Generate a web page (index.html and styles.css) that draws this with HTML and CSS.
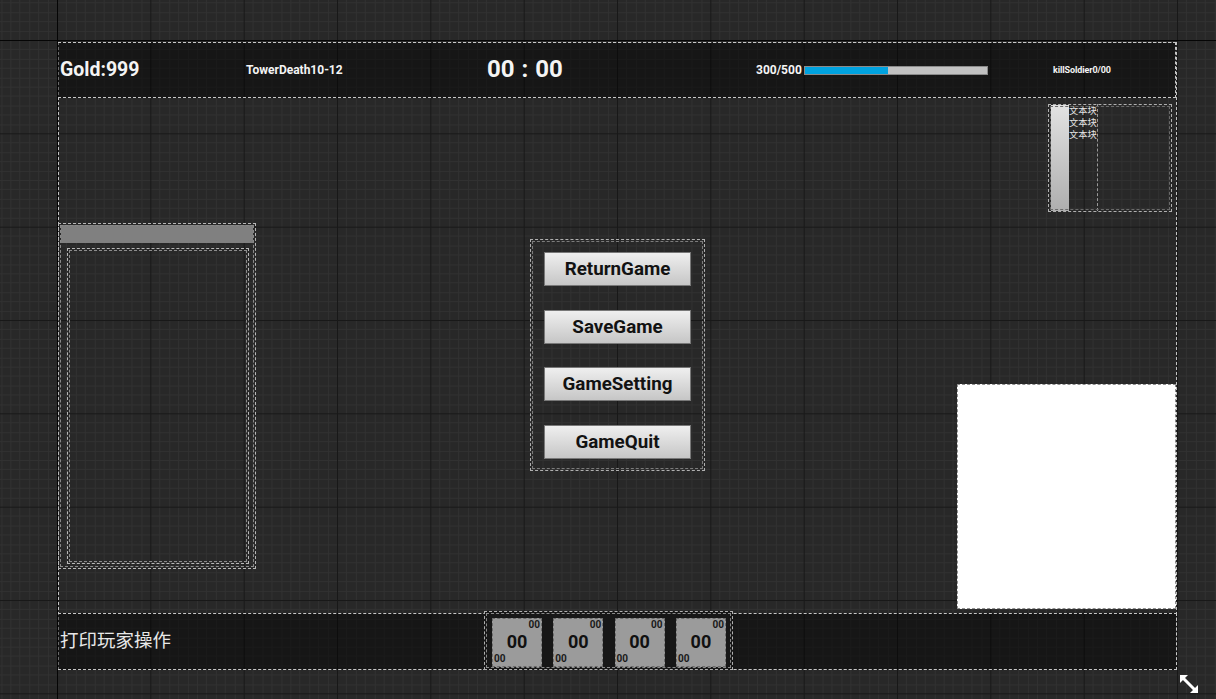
FILE: index.html
```html
<!DOCTYPE html>
<html>
<head>
<meta charset="utf-8">
<link rel="stylesheet" href="styles.css">
</head>
<body>
<svg class="grid" width="1216" height="699" shape-rendering="crispEdges">
  <defs>
    <pattern id="g" x="57" y="40" width="93.3333" height="93.3333" patternUnits="userSpaceOnUse">
      <g fill="#313131">
        <rect x="9.333" y="0" width="1" height="94"/>
        <rect x="18.667" y="0" width="1" height="94"/>
        <rect x="28" y="0" width="1" height="94"/>
        <rect x="37.333" y="0" width="1" height="94"/>
        <rect x="46.667" y="0" width="1" height="94"/>
        <rect x="56" y="0" width="1" height="94"/>
        <rect x="65.333" y="0" width="1" height="94"/>
        <rect x="74.667" y="0" width="1" height="94"/>
        <rect x="84" y="0" width="1" height="94"/>
        <rect y="9.333" x="0" height="1" width="94"/>
        <rect y="18.667" x="0" height="1" width="94"/>
        <rect y="28" x="0" height="1" width="94"/>
        <rect y="37.333" x="0" height="1" width="94"/>
        <rect y="46.667" x="0" height="1" width="94"/>
        <rect y="56" x="0" height="1" width="94"/>
        <rect y="65.333" x="0" height="1" width="94"/>
        <rect y="74.667" x="0" height="1" width="94"/>
        <rect y="84" x="0" height="1" width="94"/>
      </g>
      <g fill="#181818">
        <rect x="0" y="0" width="1" height="94"/>
        <rect x="0" y="0" width="94" height="1"/>
      </g>
    </pattern>
  </defs>
  <rect width="1216" height="699" fill="#282828"/>
  <rect width="1216" height="699" fill="url(#g)"/>
  <rect x="57" y="0" width="1" height="699" fill="#050505"/>
  <rect x="0" y="40" width="1216" height="1" fill="#050505"/>
</svg>

<div class="canvas">
  <div class="topbar">
    <div class="cell c-gold">Gold:999</div>
    <div class="cell c-tower">TowerDeath10-12</div>
    <div class="cell c-time">00 : 00</div>
    <div class="cell c-hp">
      <span class="hp-text">300/500</span>
      <div class="bar"><div class="fill" style="width:45.6%"></div></div>
    </div>
    <div class="cell c-kill">killSoldier0/00</div>
  </div>

  <div class="texts">
    <div class="tbar"></div>
    <div class="tcol">
      <div class="tline">文本块</div>
      <div class="tline">文本块</div>
      <div class="tline">文本块</div>
    </div>
  </div>

  <div class="leftpanel">
    <div class="lp-head"></div>
    <div class="lp-list"></div>
  </div>

  <div class="menu">
    <div class="btn">ReturnGame</div>
    <div class="btn">SaveGame</div>
    <div class="btn">GameSetting</div>
    <div class="btn">GameQuit</div>
  </div>

  <div class="minimap"></div>

  <div class="bottombar">
    <span class="log">打印玩家操作</span>
  </div>

  <div class="slots">
    <div class="slot"><span class="s-tr">00</span><span class="s-big">00</span><span class="s-bl">00</span></div>
    <div class="slot"><span class="s-tr">00</span><span class="s-big">00</span><span class="s-bl">00</span></div>
    <div class="slot"><span class="s-tr">00</span><span class="s-big">00</span><span class="s-bl">00</span></div>
    <div class="slot"><span class="s-tr">00</span><span class="s-big">00</span><span class="s-bl">00</span></div>
  </div>
</div>

<svg class="resize" width="18" height="18" viewBox="0 0 18 18">
  <polygon points="0,0 8,0 0,8" fill="#ffffff"/>
  <polygon points="18,18 10,18 18,10" fill="#ffffff"/>
  <line x1="3" y1="3" x2="15" y2="15" stroke="#ffffff" stroke-width="3"/>
</svg>
</body>
</html>
```

FILE: styles.css
```css
html, body {
  margin: 0;
  padding: 0;
}

body {
  width: 1216px;
  height: 699px;
  overflow: hidden;
  position: relative;
  background: #282828;
  font-family: Roboto, "Liberation Sans", "Noto Sans CJK SC", sans-serif;
  color: #f2f2f2;
}

.grid {
  position: absolute;
  left: 0;
  top: 0;
  display: block;
}

.canvas {
  position: absolute;
  left: 58px;
  top: 42px;
  width: 1119px;
  height: 628px;
  outline: 1px dashed #c4c4c4;
  outline-offset: -1px;
}

/* ---------- top bar ---------- */
.topbar {
  position: absolute;
  left: 0;
  top: 0;
  width: 1118px;
  height: 56px;
  box-sizing: border-box;
  background: rgba(0, 0, 0, 0.45);
  border-top: 1px dashed #c8c8c8;
  border-bottom: 1px dashed #c8c8c8;
  border-right: 1px dashed #c8c8c8;
  display: flex;
  align-items: center;
  padding-left: 2px;
}

.cell {
  font-weight: 700;
  white-space: nowrap;
  color: #f4f4f4;
}

.c-gold {
  width: 186px;
  font-size: 19.5px;
  margin-top: -1px;
}

.c-tower {
  width: 241px;
  font-size: 12px;
}

.c-time {
  width: 269px;
  font-size: 24px;
  margin-top: -2px;
  word-spacing: 1px;
}

.c-hp {
  width: 297px;
  display: flex;
  align-items: center;
  font-size: 12px;
}

.hp-text {
  width: 48px;
}

.bar {
  width: 184px;
  height: 9px;
  box-sizing: border-box;
  background: #c2c2c2;
  border: 1px solid #8a8a8a;
  display: flex;
}

.fill {
  height: 100%;
  background: #00a2df;
}

.c-kill {
  font-size: 9px;
  letter-spacing: -0.1px;
}

/* ---------- text blocks top right ---------- */
.texts {
  position: absolute;
  left: 990px;
  top: 62px;
  width: 124px;
  height: 108px;
  box-sizing: border-box;
  border: 1px dashed #b0b0b0;
  outline: 1px dashed #6a6a6a;
  outline-offset: -3px;
  display: flex;
  padding: 0 0 0 2px;
}

.tbar {
  width: 18px;
  height: 106px;
  background: linear-gradient(#e2e2e2, #aeaeae);
}

.tcol {
  width: 29px;
  box-sizing: border-box;
  border-right: 1px dashed #9a9a9a;
  display: flex;
  flex-direction: column;
  margin-top: -1px;
}

.tline {
  font-family: "Noto Sans CJK SC", sans-serif;
  font-size: 9.3px;
  line-height: 12px;
  color: #e4e4e4;
  white-space: nowrap;
}

/* ---------- left panel ---------- */
.leftpanel {
  position: absolute;
  left: 0;
  top: 181px;
  width: 198px;
  height: 346px;
  box-sizing: border-box;
  border: 1px dashed #b8b8b8;
  outline: 1px dashed #8a8a8a;
  outline-offset: -3px;
  padding: 1px 2px 0 1px;
  display: flex;
  flex-direction: column;
}

.lp-head {
  height: 18px;
  background: #808080;
  margin-left: 1px;
  margin-right: 0;
}

.lp-list {
  margin: 5px 6px 0 7px;
  width: 182px;
  height: 316px;
  box-sizing: border-box;
  border: 1px dashed #b8b8b8;
  outline: 1px dashed #8c8c8c;
  outline-offset: -3px;
}

/* ---------- menu ---------- */
.menu {
  position: absolute;
  left: 472px;
  top: 197px;
  width: 175px;
  height: 232px;
  box-sizing: border-box;
  border: 1px dashed #b0b0b0;
  outline: 1px dashed #7c7c7c;
  outline-offset: -3px;
  padding: 12px 0 0 13px;
  display: flex;
  flex-direction: column;
  gap: 23.5px;
}

.btn {
  width: 147px;
  height: 34px;
  box-sizing: border-box;
  border: 1px solid #787878;
  background: linear-gradient(#efefef, #c6c6c6);
  color: #121212;
  font-weight: 700;
  font-size: 18.8px;
  display: flex;
  align-items: center;
  justify-content: center;
}

/* ---------- minimap ---------- */
.minimap {
  position: absolute;
  left: 899px;
  top: 342px;
  width: 219px;
  height: 225px;
  box-sizing: border-box;
  background: #ffffff;
  border: 1px dashed #8e8e8e;
}

/* ---------- bottom bar ---------- */
.bottombar {
  position: absolute;
  left: 0;
  top: 571px;
  width: 1119px;
  height: 57px;
  box-sizing: border-box;
  background: rgba(0, 0, 0, 0.45);
  border-top: 1px dashed #c8c8c8;
  border-bottom: 1px dashed #c8c8c8;
  border-right: 1px dashed #c8c8c8;
  display: flex;
  align-items: center;
  padding-left: 2px;
}

.log {
  font-family: "Noto Sans CJK SC", sans-serif;
  font-size: 18.5px;
  color: #e8e8e8;
  margin-top: -5px;
}

/* ---------- slots ---------- */
.slots {
  position: absolute;
  left: 426px;
  top: 569px;
  width: 249px;
  height: 59px;
  box-sizing: border-box;
  background: #171717;
  border: 1px dashed #b0b0b0;
  outline: 1px dashed #8a8a8a;
  outline-offset: -3px;
  display: flex;
  gap: 11.3px;
  padding: 6px 0 0 7px;
}

.slot {
  position: relative;
  width: 50px;
  height: 49px;
  box-sizing: border-box;
  background: #9b9b9b;
  border: 1px dashed #6a6a6a;
  display: flex;
  align-items: center;
  justify-content: center;
}

.s-big {
  font-weight: 700;
  font-size: 18px;
  color: #111;
  margin-top: -3px;
}

.s-tr,
.s-bl {
  position: absolute;
  font-weight: 700;
  font-size: 10px;
  line-height: 10px;
  color: #1a1a1a;
}

.s-tr {
  right: 1px;
  top: 1px;
}

.s-bl {
  left: 1px;
  bottom: 2px;
}

/* ---------- resize handle ---------- */
.resize {
  position: absolute;
  left: 1180px;
  top: 675px;
  display: block;
}
```
